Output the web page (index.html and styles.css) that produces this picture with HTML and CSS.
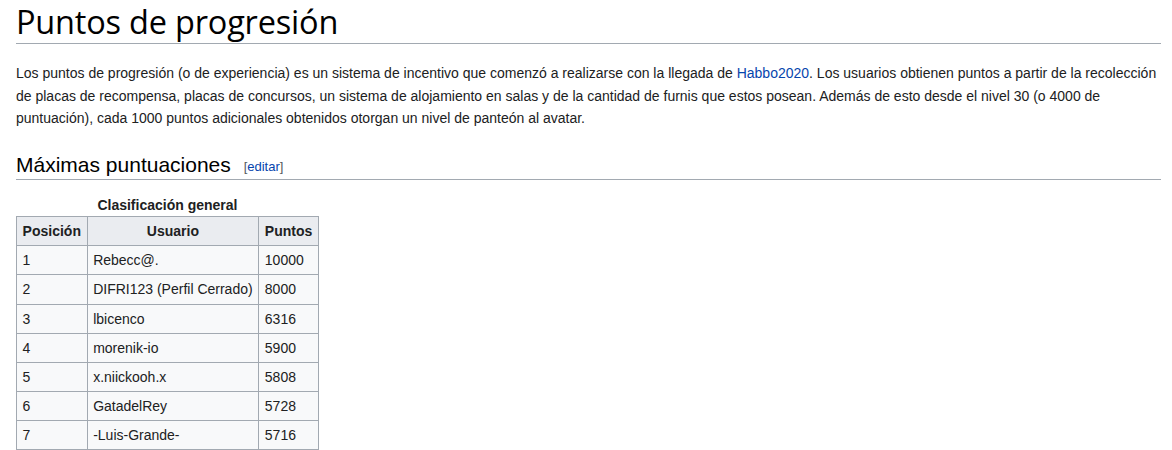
FILE: index.html
```html
<!DOCTYPE html>
<html lang="es">
<head>
    <meta charset="UTF-8">
    <title>Puntos de progresión</title>
    <link rel="stylesheet" href="styles.css">
</head>
<body>
    <div class="content">
        <h1 class="page-title">Puntos de progresión</h1>
        <p>Los puntos de progresión (o de experiencia) es un sistema de incentivo que comenzó a realizarse con la llegada de <a href="#">Habbo2020</a>. Los usuarios obtienen puntos a partir de la recolección de placas de recompensa, placas de concursos, un sistema de alojamiento en salas y de la cantidad de furnis que estos posean. Además de esto desde el nivel 30 (o 4000 de puntuación), cada 1000 puntos adicionales obtenidos otorgan un nivel de panteón al avatar.</p>

        <h2 class="section-title">Máximas puntuaciones <span class="edit-link">[<a href="#">editar</a>]</span></h2>

        <table class="wikitable">
            <caption>Clasificación general</caption>
            <tr>
                <th>Posición</th>
                <th>Usuario</th>
                <th>Puntos</th>
            </tr>
            <tr><td>1</td><td>Rebecc@.</td><td>10000</td></tr>
            <tr><td>2</td><td>DIFRI123 (Perfil Cerrado)</td><td>8000</td></tr>
            <tr><td>3</td><td>lbicenco</td><td>6316</td></tr>
            <tr><td>4</td><td>morenik-io</td><td>5900</td></tr>
            <tr><td>5</td><td>x.niickooh.x</td><td>5808</td></tr>
            <tr><td>6</td><td>GatadelRey</td><td>5728</td></tr>
            <tr><td>7</td><td>-Luis-Grande-</td><td>5716</td></tr>
            <tr><td>&nbsp;</td><td>&nbsp;</td><td>&nbsp;</td></tr>
        </table>
    </div>
</body>
</html>
```

FILE: styles.css
```css
body {
    margin: 0;
    background-color: #fff;
    color: #202122;
    font-family: 'Liberation Sans', Arial, sans-serif;
}

.content {
    padding: 0 11px 0 16px;
    font-size: 14px;
    line-height: 1.6;
}

a {
    color: #0645ad;
    text-decoration: none;
}

.page-title {
    font-family: 'Open Sans', 'DejaVu Sans', sans-serif;
    font-weight: normal;
    font-size: 32.5px;
    line-height: 1.3;
    color: #000;
    margin: 0;
    padding-top: 1px;
    border-bottom: 1px solid #a2a9b1;
    letter-spacing: -0.2px;
}

p {
    margin: 18px 0 8px;
}

.section-title {
    font-weight: normal;
    font-size: 21px;
    line-height: 1.3;
    color: #000;
    margin: 19px 0 0;
    padding-top: 3px;
    border-bottom: 1px solid #a2a9b1;
}

.edit-link {
    font-size: 13px;
    margin-left: 7px;
    color: #54595d;
    vertical-align: 1px;
}

.wikitable {
    margin: 14px 0 0;
    border-collapse: collapse;
    background-color: #f8f9fa;
    color: #202122;
    border: 1px solid #a2a9b1;
    font-size: 14px;
}

.wikitable caption {
    font-weight: bold;
    line-height: 1.6;
    padding: 0;
}

.wikitable th,
.wikitable td {
    border: 1px solid #a2a9b1;
    padding: 2.9px 5.6px;
    text-align: left;
}

.wikitable th {
    background-color: #eaecf0;
    text-align: center;
}
```
